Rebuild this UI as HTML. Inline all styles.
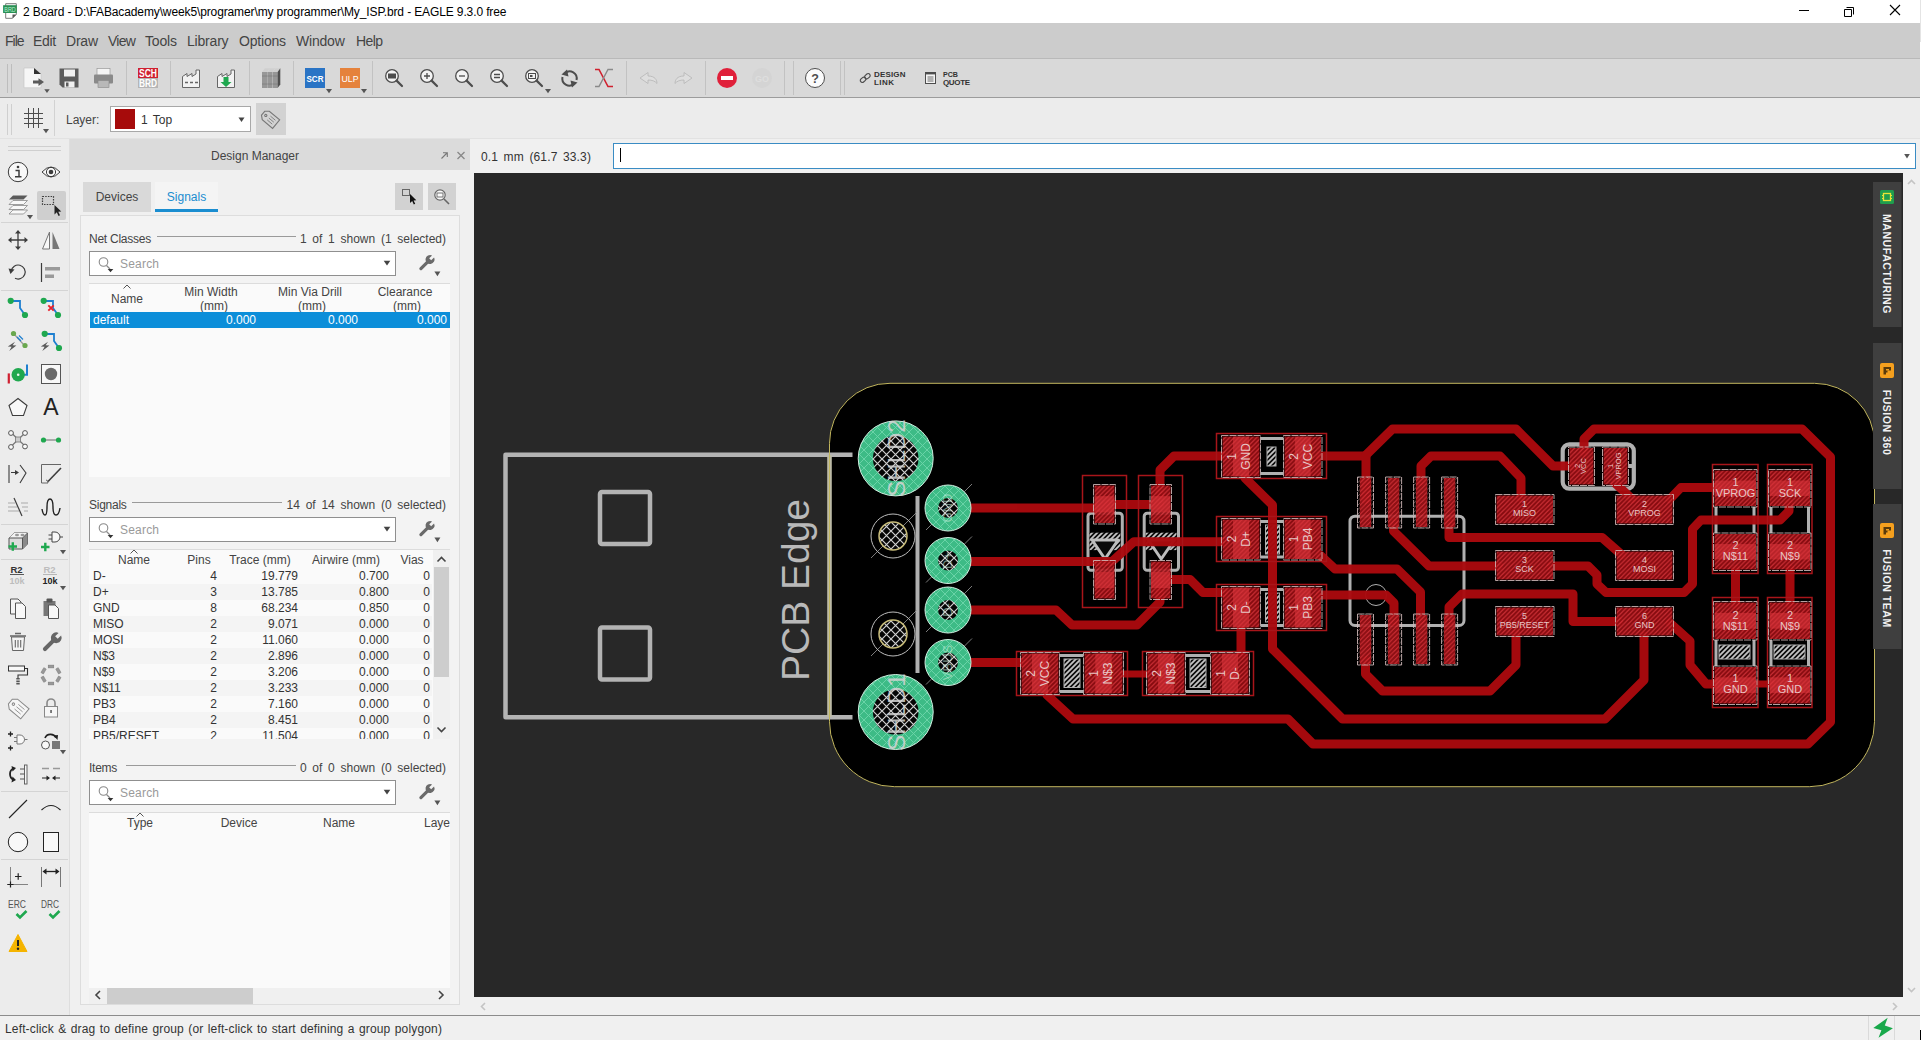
<!DOCTYPE html>
<html><head><meta charset="utf-8"><title>2 Board - EAGLE</title><style>
html,body{margin:0;padding:0}
body{width:1921px;height:1040px;position:relative;overflow:hidden;background:#f0f0f0;font-family:"Liberation Sans",sans-serif}
.abs{position:absolute}
.t{white-space:nowrap;line-height:16px}
.menu{font-size:14px;color:#444;letter-spacing:-0.2px}
</style></head><body>
<div class="abs" style="left:0;top:0;width:1920px;height:23px;background:#fff"></div>
<div class="abs t" style="left:23px;top:4px;font-size:12px;color:#000;letter-spacing:-0.12px" id="title">2 Board - D:\FABacademy\week5\programer\my programmer\My_ISP.brd - EAGLE 9.3.0 free</div>
<div class="abs" style="left:0;top:23px;width:1920px;height:35px;background:#cccccc"></div>
<div class="abs t menu" style="left:5px;top:33px;letter-spacing:-1.0px">File</div>
<div class="abs t menu" style="left:33px;top:33px;letter-spacing:-0.3px">Edit</div>
<div class="abs t menu" style="left:66px;top:33px;letter-spacing:-0.2px">Draw</div>
<div class="abs t menu" style="left:108px;top:33px;letter-spacing:-0.75px">View</div>
<div class="abs t menu" style="left:145px;top:33px;letter-spacing:-0.2px">Tools</div>
<div class="abs t menu" style="left:187px;top:33px;letter-spacing:-0.2px">Library</div>
<div class="abs t menu" style="left:239px;top:33px;letter-spacing:-0.2px">Options</div>
<div class="abs t menu" style="left:296px;top:33px;letter-spacing:-0.2px">Window</div>
<div class="abs t menu" style="left:356px;top:33px;letter-spacing:-0.55px">Help</div>
<div class="abs" style="left:0;top:58px;width:1920px;height:1px;background:#b9b9b9"></div>
<div class="abs" style="left:0;top:59px;width:1920px;height:38px;background:#d9d9d9"></div>
<div class="abs" style="left:0;top:97px;width:1920px;height:1px;background:#9c9c9c"></div>
<div class="abs" style="left:0;top:98px;width:1920px;height:41px;background:#ececec"></div>
<div class="abs" style="left:0;top:138px;width:1920px;height:1px;background:#e2e2e2"></div>
<div class="abs t" style="left:66px;top:112px;font-size:12px;color:#444">Layer:</div>
<div class="abs" style="left:110px;top:106px;width:139px;height:24px;background:#fff;border:1px solid #a8a8a8"></div>
<div class="abs" style="left:115px;top:109px;width:20px;height:20px;background:#a60b0b"></div>
<div class="abs t" style="left:141px;top:112px;font-size:12px;color:#333;word-spacing:2px">1 Top</div>
<div class="abs" style="left:256px;top:103px;width:30px;height:32px;background:#d2d2d2"></div>
<div class="abs" style="left:0;top:139px;width:70px;height:876px;background:#ececec"></div>
<div class="abs" style="left:69px;top:139px;width:1px;height:876px;background:#dedede"></div>
<div class="abs" style="left:37px;top:191px;width:29px;height:29px;background:#cfcfcf;border-radius:2px"></div>
<div class="abs" style="left:0;top:1015px;width:1920px;height:1px;background:#8c8c8c"></div>
<div class="abs" style="left:0;top:1016px;width:1920px;height:24px;background:#f0f0f0"></div>
<div class="abs t" style="left:5px;top:1021px;font-size:12px;color:#333;letter-spacing:0.15px;word-spacing:0.9px" id="status">Left-click &amp; drag to define group (or left-click to start defining a group polygon)</div>
<div class="abs" style="left:1868px;top:1016px;width:1px;height:24px;background:#dadada"></div>
<div class="abs" style="left:1894px;top:1016px;width:1px;height:24px;background:#dadada"></div>
<div class="abs" style="left:1920px;top:0;width:1px;height:1040px;background:#fff"></div>
<div class="abs" style="left:1920px;top:0;width:1px;height:42px;background:#e4e4e4"></div>
<div class="abs" style="left:1920px;top:1030px;width:1px;height:10px;background:#000"></div>
<div class="abs" style="left:470px;top:139px;width:1450px;height:34px;background:#f0f0f0"></div>
<div class="abs t" style="left:481px;top:149px;font-size:12px;color:#333;word-spacing:2px;letter-spacing:0.15px" id="coord">0.1 mm (61.7 33.3)</div>
<div class="abs" style="left:613px;top:143px;width:1301px;height:24px;background:#fff;border:1px solid #3a8cc4"></div>
<div class="abs" style="left:620px;top:148px;width:1px;height:14px;background:#000"></div>
<div class="abs" style="left:470px;top:173px;width:4px;height:842px;background:#f0f0f0"></div>
<div class="abs" style="left:1903px;top:173px;width:17px;height:842px;background:#f0f0f0"></div>
<div class="abs" style="left:474px;top:997px;width:1446px;height:18px;background:#f0f0f0"></div>
<div class="abs" style="left:70px;top:139px;width:400px;height:876px;background:#f0f0f0"></div>
<div class="abs" style="left:70px;top:139px;width:400px;height:31px;background:#dbdbdb"></div>
<div class="abs t" style="left:70px;top:148px;width:370px;text-align:center;font-size:12px;color:#444" id="dmtitle">Design Manager</div>
<div class="abs" style="left:83px;top:182px;width:68px;height:30px;background:#d9d9d9"></div>
<div class="abs t" style="left:83px;top:189px;width:68px;text-align:center;font-size:12px;color:#444">Devices</div>
<div class="abs" style="left:155px;top:182px;width:63px;height:27px;background:#f4f4f4"></div>
<div class="abs" style="left:155px;top:209px;width:63px;height:3px;background:#1a8dd0"></div>
<div class="abs t" style="left:155px;top:189px;width:63px;text-align:center;font-size:12px;color:#1a8dd0">Signals</div>
<div class="abs" style="left:395px;top:183px;width:28px;height:27px;background:#d2d2d2"></div>
<div class="abs" style="left:428px;top:183px;width:28px;height:27px;background:#d2d2d2"></div>
<div class="abs" style="left:80px;top:215px;width:380px;height:790px;background:#f3f3f3;border:1px solid #dddddd;box-sizing:border-box"></div>
<div class="abs t" style="left:89px;top:231px;font-size:12px;color:#444;letter-spacing:-0.25px">Net Classes</div>
<div class="abs" style="left:156.5px;top:236px;width:139.5px;height:1px;background:#9a9a9a"></div>
<div class="abs t" style="left:246px;top:231px;width:200px;text-align:right;font-size:12px;color:#444;word-spacing:2.4px">1 of 1 shown (1 selected)</div>
<div class="abs" style="left:89px;top:251px;width:305px;height:23px;background:#fff;border:1px solid #8f8f8f"></div>
<div class="abs t" style="left:120px;top:256px;font-size:12px;color:#9a9a9a;letter-spacing:0.2px">Search</div>
<div class="abs t" style="left:89px;top:497px;font-size:12px;color:#444;letter-spacing:-0.25px">Signals</div>
<div class="abs" style="left:131.5px;top:502px;width:150.5px;height:1px;background:#9a9a9a"></div>
<div class="abs t" style="left:246px;top:497px;width:200px;text-align:right;font-size:12px;color:#444;word-spacing:2.4px">14 of 14 shown (0 selected)</div>
<div class="abs" style="left:89px;top:517px;width:305px;height:23px;background:#fff;border:1px solid #8f8f8f"></div>
<div class="abs t" style="left:120px;top:522px;font-size:12px;color:#9a9a9a;letter-spacing:0.2px">Search</div>
<div class="abs t" style="left:89px;top:760px;font-size:12px;color:#444;letter-spacing:-0.25px">Items</div>
<div class="abs" style="left:126px;top:765px;width:170px;height:1px;background:#9a9a9a"></div>
<div class="abs t" style="left:246px;top:760px;width:200px;text-align:right;font-size:12px;color:#444;word-spacing:2.4px">0 of 0 shown (0 selected)</div>
<div class="abs" style="left:89px;top:780px;width:305px;height:23px;background:#fff;border:1px solid #8f8f8f"></div>
<div class="abs t" style="left:120px;top:785px;font-size:12px;color:#9a9a9a;letter-spacing:0.2px">Search</div>
<div class="abs" style="left:89px;top:283px;width:361px;height:193px;background:#fafafa;border-top:1px solid #dcdcdc"></div>
<div class="abs t" style="left:67px;top:291px;width:120px;text-align:center;font-size:12px;color:#444">Name</div>
<div class="abs t" style="left:151px;top:284px;width:120px;text-align:center;font-size:12px;color:#444">Min Width</div>
<div class="abs t" style="left:154px;top:298px;width:120px;text-align:center;font-size:12px;color:#444">(mm)</div>
<div class="abs t" style="left:250px;top:284px;width:120px;text-align:center;font-size:12px;color:#444">Min Via Drill</div>
<div class="abs t" style="left:252px;top:298px;width:120px;text-align:center;font-size:12px;color:#444">(mm)</div>
<div class="abs t" style="left:345px;top:284px;width:120px;text-align:center;font-size:12px;color:#444">Clearance</div>
<div class="abs t" style="left:347px;top:298px;width:120px;text-align:center;font-size:12px;color:#444">(mm)</div>
<div class="abs" style="left:90px;top:312px;width:360px;height:16px;background:#0c8ed9"></div>
<div class="abs t" style="left:93px;top:312px;font-size:12px;color:#fff">default</div>
<div class="abs t" style="left:196px;top:312px;width:60px;text-align:right;font-size:12px;color:#fff">0.000</div>
<div class="abs t" style="left:298px;top:312px;width:60px;text-align:right;font-size:12px;color:#fff">0.000</div>
<div class="abs t" style="left:387px;top:312px;width:60px;text-align:right;font-size:12px;color:#fff">0.000</div>
<div class="abs" style="left:89px;top:549px;width:361px;height:189px;background:#fafafa;border-top:1px solid #dcdcdc;overflow:hidden" id="sigtab">
<div class="abs" style="left:0;top:18px;width:343px;height:16px;background:#fafafa"></div>
<div class="abs t" style="left:4px;top:18px;font-size:12px;color:#333">D-</div>
<div class="abs t" style="left:68px;top:18px;width:60px;text-align:right;font-size:12px;color:#333">4</div>
<div class="abs t" style="left:149px;top:18px;width:60px;text-align:right;font-size:12px;color:#333">19.779</div>
<div class="abs t" style="left:240px;top:18px;width:60px;text-align:right;font-size:12px;color:#333">0.700</div>
<div class="abs t" style="left:281px;top:18px;width:60px;text-align:right;font-size:12px;color:#333">0</div>
<div class="abs" style="left:0;top:34px;width:343px;height:16px;background:#f4f4f4"></div>
<div class="abs t" style="left:4px;top:34px;font-size:12px;color:#333">D+</div>
<div class="abs t" style="left:68px;top:34px;width:60px;text-align:right;font-size:12px;color:#333">3</div>
<div class="abs t" style="left:149px;top:34px;width:60px;text-align:right;font-size:12px;color:#333">13.785</div>
<div class="abs t" style="left:240px;top:34px;width:60px;text-align:right;font-size:12px;color:#333">0.800</div>
<div class="abs t" style="left:281px;top:34px;width:60px;text-align:right;font-size:12px;color:#333">0</div>
<div class="abs" style="left:0;top:50px;width:343px;height:16px;background:#fafafa"></div>
<div class="abs t" style="left:4px;top:50px;font-size:12px;color:#333">GND</div>
<div class="abs t" style="left:68px;top:50px;width:60px;text-align:right;font-size:12px;color:#333">8</div>
<div class="abs t" style="left:149px;top:50px;width:60px;text-align:right;font-size:12px;color:#333">68.234</div>
<div class="abs t" style="left:240px;top:50px;width:60px;text-align:right;font-size:12px;color:#333">0.850</div>
<div class="abs t" style="left:281px;top:50px;width:60px;text-align:right;font-size:12px;color:#333">0</div>
<div class="abs" style="left:0;top:66px;width:343px;height:16px;background:#f4f4f4"></div>
<div class="abs t" style="left:4px;top:66px;font-size:12px;color:#333">MISO</div>
<div class="abs t" style="left:68px;top:66px;width:60px;text-align:right;font-size:12px;color:#333">2</div>
<div class="abs t" style="left:149px;top:66px;width:60px;text-align:right;font-size:12px;color:#333">9.071</div>
<div class="abs t" style="left:240px;top:66px;width:60px;text-align:right;font-size:12px;color:#333">0.000</div>
<div class="abs t" style="left:281px;top:66px;width:60px;text-align:right;font-size:12px;color:#333">0</div>
<div class="abs" style="left:0;top:82px;width:343px;height:16px;background:#fafafa"></div>
<div class="abs t" style="left:4px;top:82px;font-size:12px;color:#333">MOSI</div>
<div class="abs t" style="left:68px;top:82px;width:60px;text-align:right;font-size:12px;color:#333">2</div>
<div class="abs t" style="left:149px;top:82px;width:60px;text-align:right;font-size:12px;color:#333">11.060</div>
<div class="abs t" style="left:240px;top:82px;width:60px;text-align:right;font-size:12px;color:#333">0.000</div>
<div class="abs t" style="left:281px;top:82px;width:60px;text-align:right;font-size:12px;color:#333">0</div>
<div class="abs" style="left:0;top:98px;width:343px;height:16px;background:#f4f4f4"></div>
<div class="abs t" style="left:4px;top:98px;font-size:12px;color:#333">N$3</div>
<div class="abs t" style="left:68px;top:98px;width:60px;text-align:right;font-size:12px;color:#333">2</div>
<div class="abs t" style="left:149px;top:98px;width:60px;text-align:right;font-size:12px;color:#333">2.896</div>
<div class="abs t" style="left:240px;top:98px;width:60px;text-align:right;font-size:12px;color:#333">0.000</div>
<div class="abs t" style="left:281px;top:98px;width:60px;text-align:right;font-size:12px;color:#333">0</div>
<div class="abs" style="left:0;top:114px;width:343px;height:16px;background:#fafafa"></div>
<div class="abs t" style="left:4px;top:114px;font-size:12px;color:#333">N$9</div>
<div class="abs t" style="left:68px;top:114px;width:60px;text-align:right;font-size:12px;color:#333">2</div>
<div class="abs t" style="left:149px;top:114px;width:60px;text-align:right;font-size:12px;color:#333">3.206</div>
<div class="abs t" style="left:240px;top:114px;width:60px;text-align:right;font-size:12px;color:#333">0.000</div>
<div class="abs t" style="left:281px;top:114px;width:60px;text-align:right;font-size:12px;color:#333">0</div>
<div class="abs" style="left:0;top:130px;width:343px;height:16px;background:#f4f4f4"></div>
<div class="abs t" style="left:4px;top:130px;font-size:12px;color:#333">N$11</div>
<div class="abs t" style="left:68px;top:130px;width:60px;text-align:right;font-size:12px;color:#333">2</div>
<div class="abs t" style="left:149px;top:130px;width:60px;text-align:right;font-size:12px;color:#333">3.233</div>
<div class="abs t" style="left:240px;top:130px;width:60px;text-align:right;font-size:12px;color:#333">0.000</div>
<div class="abs t" style="left:281px;top:130px;width:60px;text-align:right;font-size:12px;color:#333">0</div>
<div class="abs" style="left:0;top:146px;width:343px;height:16px;background:#fafafa"></div>
<div class="abs t" style="left:4px;top:146px;font-size:12px;color:#333">PB3</div>
<div class="abs t" style="left:68px;top:146px;width:60px;text-align:right;font-size:12px;color:#333">2</div>
<div class="abs t" style="left:149px;top:146px;width:60px;text-align:right;font-size:12px;color:#333">7.160</div>
<div class="abs t" style="left:240px;top:146px;width:60px;text-align:right;font-size:12px;color:#333">0.000</div>
<div class="abs t" style="left:281px;top:146px;width:60px;text-align:right;font-size:12px;color:#333">0</div>
<div class="abs" style="left:0;top:162px;width:343px;height:16px;background:#f4f4f4"></div>
<div class="abs t" style="left:4px;top:162px;font-size:12px;color:#333">PB4</div>
<div class="abs t" style="left:68px;top:162px;width:60px;text-align:right;font-size:12px;color:#333">2</div>
<div class="abs t" style="left:149px;top:162px;width:60px;text-align:right;font-size:12px;color:#333">8.451</div>
<div class="abs t" style="left:240px;top:162px;width:60px;text-align:right;font-size:12px;color:#333">0.000</div>
<div class="abs t" style="left:281px;top:162px;width:60px;text-align:right;font-size:12px;color:#333">0</div>
<div class="abs" style="left:0;top:178px;width:343px;height:16px;background:#fafafa"></div>
<div class="abs t" style="left:4px;top:178px;font-size:12px;color:#333">PB5/RESET</div>
<div class="abs t" style="left:68px;top:178px;width:60px;text-align:right;font-size:12px;color:#333">2</div>
<div class="abs t" style="left:149px;top:178px;width:60px;text-align:right;font-size:12px;color:#333">11.504</div>
<div class="abs t" style="left:240px;top:178px;width:60px;text-align:right;font-size:12px;color:#333">0.000</div>
<div class="abs t" style="left:281px;top:178px;width:60px;text-align:right;font-size:12px;color:#333">0</div>
<div class="abs" style="left:344px;top:0;width:17px;height:191px;background:#f0f0f0"></div>
<div class="abs" style="left:345px;top:17px;width:15px;height:110px;background:#cdcdcd"></div>
</div>
<div class="abs t" style="left:74px;top:552px;width:120px;text-align:center;font-size:12px;color:#444">Name</div>
<div class="abs t" style="left:139px;top:552px;width:120px;text-align:center;font-size:12px;color:#444">Pins</div>
<div class="abs t" style="left:200px;top:552px;width:120px;text-align:center;font-size:12px;color:#444">Trace (mm)</div>
<div class="abs t" style="left:286px;top:552px;width:120px;text-align:center;font-size:12px;color:#444">Airwire (mm)</div>
<div class="abs t" style="left:352px;top:552px;width:120px;text-align:center;font-size:12px;color:#444">Vias</div>
<div class="abs" style="left:89px;top:812px;width:361px;height:191px;background:#fafafa;border-top:1px solid #dcdcdc;overflow:hidden">
<div class="abs t" style="left:335px;top:2px;font-size:12px;color:#444">Layer</div>
<div class="abs" style="left:0;top:175px;width:361px;height:16px;background:#f0f0f0"></div>
<div class="abs" style="left:18px;top:175px;width:146px;height:16px;background:#cdcdcd"></div>
</div>
<div class="abs t" style="left:80px;top:815px;width:120px;text-align:center;font-size:12px;color:#444">Type</div>
<div class="abs t" style="left:179px;top:815px;width:120px;text-align:center;font-size:12px;color:#444">Device</div>
<div class="abs t" style="left:279px;top:815px;width:120px;text-align:center;font-size:12px;color:#444">Name</div>
<svg class="abs" style="left:474px;top:173px" width="1429" height="824" viewBox="474 173 1429 824" font-family="Liberation Sans, sans-serif">
<defs>
<pattern id="hp" width="4.5" height="4.5" patternUnits="userSpaceOnUse"><rect width="4.5" height="4.5" fill="#da3239"/><path d="M-1,1 L1,-1 M0,4.5 L4.5,0 M3.5,5.5 L5.5,3.5" stroke="#900b10" stroke-width="2"/></pattern>
<pattern id="ht" width="4.5" height="4.5" patternUnits="userSpaceOnUse"><path d="M-1,1 L1,-1 M0,4.5 L4.5,0 M3.5,5.5 L5.5,3.5" stroke="#c9b0b0" stroke-width="0.7" opacity="0.7"/></pattern>
<pattern id="hg" width="5" height="5" patternUnits="userSpaceOnUse"><rect width="5" height="5" fill="#0a0a0a"/><path d="M-1,1 L1,-1 M0,5 L5,0 M4,6 L6,4" stroke="#c4c4c4" stroke-width="1.8"/></pattern>
<pattern id="xg" width="9" height="9" patternUnits="userSpaceOnUse"><rect width="9" height="9" fill="#3dbb86"/><path d="M0,0 L9,9 M0,9 L9,0" stroke="#6ed6aa" stroke-width="0.9"/></pattern>
<pattern id="xd" width="9" height="9" patternUnits="userSpaceOnUse"><rect width="9" height="9" fill="#050505"/><path d="M0,0 L9,9 M0,9 L9,0" stroke="#cfcfcf" stroke-width="1.2"/></pattern>
</defs>
<rect x="474" y="173" width="1429" height="824" fill="#282828"/>
<path d="M890,383.3 H1814.5 A60,60 0 0 1 1874.5,443.3 V721.7 A65,65 0 0 1 1809.5,786.7 H894.5 A65,65 0 0 1 829.5,721.7 V443.3 A60,60 0 0 1 890,383.3 Z" fill="#000"/>
<g fill="none" stroke="#b3b3b3" stroke-width="4.5" stroke-linejoin="round">
<path d="M852.5,454.7 H505.5 V717.3 H852.5"/>
<rect x="600" y="492" width="50" height="52" rx="2"/>
<rect x="600" y="627.5" width="50" height="52" rx="2"/>
</g>
<path d="M829.5,455 V717" stroke="#bdbba6" stroke-width="4.6" fill="none"/>
<path d="M890,383.3 H1814.5 A60,60 0 0 1 1874.5,443.3 V721.7 A65,65 0 0 1 1809.5,786.7 H894.5 A65,65 0 0 1 829.5,721.7 V443.3 A60,60 0 0 1 890,383.3 Z" fill="none" stroke="#c2b65e" stroke-width="1"/>
<text transform="translate(809,590) rotate(-90)" text-anchor="middle" font-size="39" fill="#b9b9b9">PCB Edge</text>
<g fill="none" stroke="#b0b0b0" stroke-width="3">
<path d="M1261,438.5 H1283 M1261,473.5 H1283"/>
<path d="M1261,521.5 H1283 M1261,557 H1283"/>
<path d="M1261,589.5 H1283 M1261,625.5 H1283"/>
<path d="M1060,655.5 H1083 M1060,691.5 H1083"/>
<path d="M1186,655.5 H1210 M1186,691.5 H1210"/>
<rect x="1088" y="513.3" width="34.3" height="57" rx="3"/>
<rect x="1144.2" y="513.3" width="34.3" height="57" rx="3"/>
<rect x="1350" y="516.2" width="114" height="109.3" rx="5"/>
<rect x="1562.7" y="444.3" width="71.1" height="44.3" rx="6.5" stroke-width="4.2"/>
<path d="M1629,466 H1633.5" stroke-width="4"/>
<path d="M1716,507 V533 M1716,640 V666"/>
<path d="M1754,507 V533 M1754,640 V666"/>
<path d="M1771,507 V533 M1771,640 V666"/>
<path d="M1808.5,507 V533 M1808.5,640 V666"/>
</g>
<circle cx="1376" cy="595" r="10.5" fill="none" stroke="#b0b0b0" stroke-width="1"/>
<rect x="1267" y="447" width="9" height="19" fill="url(#hg)" stroke="#b0b0b0" stroke-width="1"/>
<rect x="1265.5" y="525" width="14.0" height="29" fill="url(#hg)" stroke="#b0b0b0" stroke-width="1"/>
<rect x="1265.5" y="593" width="14.0" height="29" fill="url(#hg)" stroke="#b0b0b0" stroke-width="1"/>
<rect x="1064" y="659" width="16" height="28.5" fill="url(#hg)" stroke="#b0b0b0" stroke-width="1"/>
<rect x="1190" y="659" width="16" height="28.5" fill="url(#hg)" stroke="#b0b0b0" stroke-width="1"/>
<rect x="1719" y="645" width="31" height="14" fill="url(#hg)" stroke="#b0b0b0" stroke-width="1"/>
<rect x="1774" y="645" width="31" height="14" fill="url(#hg)" stroke="#b0b0b0" stroke-width="1"/>
<rect x="1089.6" y="532.7" width="30.7" height="17.4" fill="url(#hg)"/>
<path d="M1092.1,540 H1118.1 L1105.0,559 Z" fill="#0a0a0a" stroke="#bdbdbd" stroke-width="3" stroke-linejoin="round"/>
<rect x="1145.8" y="532.7" width="30.7" height="17.4" fill="url(#hg)"/>
<path d="M1148.3,540 H1174.3 L1161.2,559 Z" fill="#0a0a0a" stroke="#bdbdbd" stroke-width="3" stroke-linejoin="round"/>
<g opacity="0.97">
<path d="M960,508 L1105,508" stroke="#aa0a0e" stroke-width="9" fill="none" stroke-linejoin="round" stroke-linecap="round"/>
<path d="M1105,504.5 L1160,504.5" stroke="#aa0a0e" stroke-width="9" fill="none" stroke-linejoin="round" stroke-linecap="round"/>
<path d="M1160,500 L1160,470 L1174,456 L1224,456" stroke="#aa0a0e" stroke-width="9" fill="none" stroke-linejoin="round" stroke-linecap="round"/>
<path d="M1245,478 L1272.5,505 L1272.5,649 L1342.5,719 L1605,719 L1644,680 L1644,636" stroke="#aa0a0e" stroke-width="9" fill="none" stroke-linejoin="round" stroke-linecap="round"/>
<path d="M960,561.5 L1112,561.5 L1134,541.7 L1224,541.7" stroke="#aa0a0e" stroke-width="9" fill="none" stroke-linejoin="round" stroke-linecap="round"/>
<path d="M960,610 L1056,610 L1072,625 L1137,625 L1160,602 L1160,580" stroke="#aa0a0e" stroke-width="9" fill="none" stroke-linejoin="round" stroke-linecap="round"/>
<path d="M1160,579.5 L1190,579.5 L1203,592.5 L1224,592.5" stroke="#aa0a0e" stroke-width="9" fill="none" stroke-linejoin="round" stroke-linecap="round"/>
<path d="M960,662.5 L1024,662.5" stroke="#aa0a0e" stroke-width="9" fill="none" stroke-linejoin="round" stroke-linecap="round"/>
<path d="M1122,674 L1148,674" stroke="#aa0a0e" stroke-width="7" fill="none" stroke-linejoin="round" stroke-linecap="round"/>
<path d="M1241,629 L1241,654" stroke="#aa0a0e" stroke-width="9" fill="none" stroke-linejoin="round" stroke-linecap="round"/>
<path d="M1047,695 L1073,719 L1288,719 L1313,744 L1808,744 L1830.5,722 L1830.5,457 L1802,429 L1594,429 L1584,439 L1584,452" stroke="#aa0a0e" stroke-width="9" fill="none" stroke-linejoin="round" stroke-linecap="round"/>
<path d="M1320,456 L1366,456" stroke="#aa0a0e" stroke-width="9" fill="none" stroke-linejoin="round" stroke-linecap="round"/>
<path d="M1366,500 L1366,455 L1392.5,429 L1516,429 L1553,466 L1574,466" stroke="#aa0a0e" stroke-width="9" fill="none" stroke-linejoin="round" stroke-linecap="round"/>
<path d="M1421,482 L1421,466 L1431,456 L1500,456 L1521,478 L1521,498" stroke="#aa0a0e" stroke-width="9" fill="none" stroke-linejoin="round" stroke-linecap="round"/>
<path d="M1449,522 L1449,537.5 L1602,537.5 L1622,555" stroke="#aa0a0e" stroke-width="9" fill="none" stroke-linejoin="round" stroke-linecap="round"/>
<path d="M1393.5,522 L1393.5,531 L1429,566 L1499,566" stroke="#aa0a0e" stroke-width="9" fill="none" stroke-linejoin="round" stroke-linecap="round"/>
<path d="M1551,566 L1588,566 L1597,575 L1597,584 L1606,592.5 L1684,592.5 L1692.5,584 L1692.5,529 L1701,520 L1780,520 L1789,511 L1789,503" stroke="#aa0a0e" stroke-width="9" fill="none" stroke-linejoin="round" stroke-linecap="round"/>
<path d="M1320,555 L1335,569 L1397,569 L1420.5,592 L1420.5,622" stroke="#aa0a0e" stroke-width="9" fill="none" stroke-linejoin="round" stroke-linecap="round"/>
<path d="M1320,595 L1386,595 L1394,603 L1394,622" stroke="#aa0a0e" stroke-width="9" fill="none" stroke-linejoin="round" stroke-linecap="round"/>
<path d="M1449,622 L1449,607 L1462,594 L1573,594 L1573,621.5 L1619,621.5" stroke="#aa0a0e" stroke-width="9" fill="none" stroke-linejoin="round" stroke-linecap="round"/>
<path d="M1365.5,660 L1365.5,674 L1382.5,691 L1490,691 L1516,665 L1516,634" stroke="#aa0a0e" stroke-width="9" fill="none" stroke-linejoin="round" stroke-linecap="round"/>
<path d="M1615,483 L1632,499" stroke="#aa0a0e" stroke-width="9" fill="none" stroke-linejoin="round" stroke-linecap="round"/>
<path d="M1670,499 L1681,487.5 L1718,487.5" stroke="#aa0a0e" stroke-width="9" fill="none" stroke-linejoin="round" stroke-linecap="round"/>
<path d="M1735.5,569 L1735.5,605" stroke="#aa0a0e" stroke-width="9" fill="none" stroke-linejoin="round" stroke-linecap="round"/>
<path d="M1790,569 L1790,605" stroke="#aa0a0e" stroke-width="9" fill="none" stroke-linejoin="round" stroke-linecap="round"/>
<path d="M1670,623 L1690,641 L1690,665 L1706,684 L1718,684" stroke="#aa0a0e" stroke-width="9" fill="none" stroke-linejoin="round" stroke-linecap="round"/>
<path d="M1755,684 L1772,684" stroke="#aa0a0e" stroke-width="7" fill="none" stroke-linejoin="round" stroke-linecap="round"/>
</g>
<g fill="none" stroke="#a8151a" stroke-width="1.5">
<rect x="1216.5" y="433.5" width="110.0" height="45.0"/>
<rect x="1216.5" y="516.5" width="110.0" height="45.0"/>
<rect x="1216.5" y="584.5" width="110.0" height="46.0"/>
<rect x="1016.5" y="651.5" width="111.0" height="44.0"/>
<rect x="1142.5" y="651.5" width="111.0" height="44.0"/>
<rect x="1082.5" y="475.5" width="44.0" height="132.0"/>
<rect x="1138.5" y="475.5" width="44.0" height="132.0"/>
<rect x="1712.5" y="464.5" width="45.5" height="109.0"/>
<rect x="1767.5" y="464.5" width="44.5" height="109.0"/>
<rect x="1712.5" y="597.5" width="45.5" height="110.0"/>
<rect x="1767.5" y="597.5" width="44.5" height="110.0"/>
</g>
<rect x="1094.5" y="485.5" width="20.0" height="37.5" fill="url(#hp)" opacity="0.93"/>
<rect x="1094.5" y="496.15" width="20" height="16.2" fill="#d8333a" opacity="0.6"/>
<rect x="1093.5" y="484.5" width="22" height="39.5" fill="none" stroke="#d4bcbc" stroke-width="1" stroke-dasharray="7 1" opacity="0.85"/>
<rect x="1094.5" y="561.5" width="20.0" height="37" fill="url(#hp)" opacity="0.93"/>
<rect x="1094.5" y="572.0" width="20" height="16.0" fill="#d8333a" opacity="0.6"/>
<rect x="1093.5" y="560.5" width="22" height="39" fill="none" stroke="#d4bcbc" stroke-width="1" stroke-dasharray="7 1" opacity="0.85"/>
<rect x="1151.0" y="485.5" width="19.5" height="37.5" fill="url(#hp)" opacity="0.93"/>
<rect x="1151.0" y="496.15" width="19.5" height="16.2" fill="#d8333a" opacity="0.6"/>
<rect x="1150.0" y="484.5" width="21.5" height="39.5" fill="none" stroke="#d4bcbc" stroke-width="1" stroke-dasharray="7 1" opacity="0.85"/>
<rect x="1151.0" y="561.5" width="19.5" height="37" fill="url(#hp)" opacity="0.93"/>
<rect x="1151.0" y="572.0" width="19.5" height="16.0" fill="#d8333a" opacity="0.6"/>
<rect x="1150.0" y="560.5" width="21.5" height="39" fill="none" stroke="#d4bcbc" stroke-width="1" stroke-dasharray="7 1" opacity="0.85"/>
<rect x="1222.5" y="436.5" width="37.0" height="40" fill="url(#hp)" opacity="0.93"/>
<rect x="1233.0" y="436.5" width="16.0" height="40" fill="#d8333a" opacity="0.6"/>
<rect x="1221.5" y="435.5" width="39" height="42" fill="none" stroke="#d4bcbc" stroke-width="1" stroke-dasharray="7 1" opacity="0.85"/>
<rect x="1284.5" y="436.5" width="36.5" height="40" fill="url(#hp)" opacity="0.93"/>
<rect x="1294.85" y="436.5" width="15.8" height="40" fill="#d8333a" opacity="0.6"/>
<rect x="1283.5" y="435.5" width="38.5" height="42" fill="none" stroke="#d4bcbc" stroke-width="1" stroke-dasharray="7 1" opacity="0.85"/>
<rect x="1222.5" y="519.5" width="37.0" height="39.5" fill="url(#hp)" opacity="0.93"/>
<rect x="1233.0" y="519.5" width="16.0" height="39.5" fill="#d8333a" opacity="0.6"/>
<rect x="1221.5" y="518.5" width="39" height="41.5" fill="none" stroke="#d4bcbc" stroke-width="1" stroke-dasharray="7 1" opacity="0.85"/>
<rect x="1284.5" y="519.5" width="36.5" height="39.5" fill="url(#hp)" opacity="0.93"/>
<rect x="1294.85" y="519.5" width="15.8" height="39.5" fill="#d8333a" opacity="0.6"/>
<rect x="1283.5" y="518.5" width="38.5" height="41.5" fill="none" stroke="#d4bcbc" stroke-width="1" stroke-dasharray="7 1" opacity="0.85"/>
<rect x="1222.5" y="587.5" width="37.0" height="40" fill="url(#hp)" opacity="0.93"/>
<rect x="1233.0" y="587.5" width="16.0" height="40" fill="#d8333a" opacity="0.6"/>
<rect x="1221.5" y="586.5" width="39" height="42" fill="none" stroke="#d4bcbc" stroke-width="1" stroke-dasharray="7 1" opacity="0.85"/>
<rect x="1284.5" y="587.5" width="36.5" height="40" fill="url(#hp)" opacity="0.93"/>
<rect x="1294.85" y="587.5" width="15.8" height="40" fill="#d8333a" opacity="0.6"/>
<rect x="1283.5" y="586.5" width="38.5" height="42" fill="none" stroke="#d4bcbc" stroke-width="1" stroke-dasharray="7 1" opacity="0.85"/>
<rect x="1021.5" y="653.5" width="37.0" height="40" fill="url(#hp)" opacity="0.93"/>
<rect x="1032.0" y="653.5" width="16.0" height="40" fill="#d8333a" opacity="0.6"/>
<rect x="1020.5" y="652.5" width="39" height="42" fill="none" stroke="#d4bcbc" stroke-width="1" stroke-dasharray="7 1" opacity="0.85"/>
<rect x="1084.5" y="653.5" width="38.0" height="40" fill="url(#hp)" opacity="0.93"/>
<rect x="1095.3" y="653.5" width="16.400000000000002" height="40" fill="#d8333a" opacity="0.6"/>
<rect x="1083.5" y="652.5" width="40" height="42" fill="none" stroke="#d4bcbc" stroke-width="1" stroke-dasharray="7 1" opacity="0.85"/>
<rect x="1147.5" y="653.5" width="37.0" height="40" fill="url(#hp)" opacity="0.93"/>
<rect x="1158.0" y="653.5" width="16.0" height="40" fill="#d8333a" opacity="0.6"/>
<rect x="1146.5" y="652.5" width="39" height="42" fill="none" stroke="#d4bcbc" stroke-width="1" stroke-dasharray="7 1" opacity="0.85"/>
<rect x="1211.5" y="653.5" width="37.0" height="40" fill="url(#hp)" opacity="0.93"/>
<rect x="1222.0" y="653.5" width="16.0" height="40" fill="#d8333a" opacity="0.6"/>
<rect x="1210.5" y="652.5" width="39" height="42" fill="none" stroke="#d4bcbc" stroke-width="1" stroke-dasharray="7 1" opacity="0.85"/>
<rect x="1357.5" y="477.0" width="16.0" height="51.0" fill="url(#ht)"/>
<rect x="1359.8" y="478.0" width="11.4" height="49.0" fill="url(#hp)" opacity="0.93"/>
<rect x="1357.5" y="477.0" width="16.0" height="51.0" fill="none" stroke="#d4bcbc" stroke-width="1" stroke-dasharray="7 1" opacity="0.85"/>
<rect x="1357.5" y="614.0" width="16.0" height="51.0" fill="url(#ht)"/>
<rect x="1359.8" y="615.0" width="11.4" height="49.0" fill="url(#hp)" opacity="0.93"/>
<rect x="1357.5" y="614.0" width="16.0" height="51.0" fill="none" stroke="#d4bcbc" stroke-width="1" stroke-dasharray="7 1" opacity="0.85"/>
<rect x="1385.6" y="477.0" width="16.0" height="51.0" fill="url(#ht)"/>
<rect x="1387.8999999999999" y="478.0" width="11.4" height="49.0" fill="url(#hp)" opacity="0.93"/>
<rect x="1385.6" y="477.0" width="16.0" height="51.0" fill="none" stroke="#d4bcbc" stroke-width="1" stroke-dasharray="7 1" opacity="0.85"/>
<rect x="1385.6" y="614.0" width="16.0" height="51.0" fill="url(#ht)"/>
<rect x="1387.8999999999999" y="615.0" width="11.4" height="49.0" fill="url(#hp)" opacity="0.93"/>
<rect x="1385.6" y="614.0" width="16.0" height="51.0" fill="none" stroke="#d4bcbc" stroke-width="1" stroke-dasharray="7 1" opacity="0.85"/>
<rect x="1413.6" y="477.0" width="16.0" height="51.0" fill="url(#ht)"/>
<rect x="1415.8999999999999" y="478.0" width="11.4" height="49.0" fill="url(#hp)" opacity="0.93"/>
<rect x="1413.6" y="477.0" width="16.0" height="51.0" fill="none" stroke="#d4bcbc" stroke-width="1" stroke-dasharray="7 1" opacity="0.85"/>
<rect x="1413.6" y="614.0" width="16.0" height="51.0" fill="url(#ht)"/>
<rect x="1415.8999999999999" y="615.0" width="11.4" height="49.0" fill="url(#hp)" opacity="0.93"/>
<rect x="1413.6" y="614.0" width="16.0" height="51.0" fill="none" stroke="#d4bcbc" stroke-width="1" stroke-dasharray="7 1" opacity="0.85"/>
<rect x="1441.6" y="477.0" width="16.0" height="51.0" fill="url(#ht)"/>
<rect x="1443.8999999999999" y="478.0" width="11.4" height="49.0" fill="url(#hp)" opacity="0.93"/>
<rect x="1441.6" y="477.0" width="16.0" height="51.0" fill="none" stroke="#d4bcbc" stroke-width="1" stroke-dasharray="7 1" opacity="0.85"/>
<rect x="1441.6" y="614.0" width="16.0" height="51.0" fill="url(#ht)"/>
<rect x="1443.8999999999999" y="615.0" width="11.4" height="49.0" fill="url(#hp)" opacity="0.93"/>
<rect x="1441.6" y="614.0" width="16.0" height="51.0" fill="none" stroke="#d4bcbc" stroke-width="1" stroke-dasharray="7 1" opacity="0.85"/>
<rect x="1496.5" y="495.5" width="56.5" height="28" fill="url(#hp)" opacity="0.93"/>
<rect x="1495.5" y="494.5" width="58.5" height="30" fill="none" stroke="#d4bcbc" stroke-width="1" stroke-dasharray="7 1" opacity="0.85"/>
<rect x="1496.5" y="551.5" width="56.5" height="28" fill="url(#hp)" opacity="0.93"/>
<rect x="1495.5" y="550.5" width="58.5" height="30" fill="none" stroke="#d4bcbc" stroke-width="1" stroke-dasharray="7 1" opacity="0.85"/>
<rect x="1496.5" y="607.5" width="56.5" height="28" fill="url(#hp)" opacity="0.93"/>
<rect x="1495.5" y="606.5" width="58.5" height="30" fill="none" stroke="#d4bcbc" stroke-width="1" stroke-dasharray="7 1" opacity="0.85"/>
<rect x="1616.5" y="495.5" width="56.0" height="28" fill="url(#hp)" opacity="0.93"/>
<rect x="1615.5" y="494.5" width="58" height="30" fill="none" stroke="#d4bcbc" stroke-width="1" stroke-dasharray="7 1" opacity="0.85"/>
<rect x="1616.5" y="551.5" width="56.0" height="28" fill="url(#hp)" opacity="0.93"/>
<rect x="1615.5" y="550.5" width="58" height="30" fill="none" stroke="#d4bcbc" stroke-width="1" stroke-dasharray="7 1" opacity="0.85"/>
<rect x="1616.5" y="607.5" width="56.0" height="28" fill="url(#hp)" opacity="0.93"/>
<rect x="1615.5" y="606.5" width="58" height="30" fill="none" stroke="#d4bcbc" stroke-width="1" stroke-dasharray="7 1" opacity="0.85"/>
<rect x="1569.5" y="448.0" width="24.0" height="36.5" fill="url(#hp)" opacity="0.93"/>
<rect x="1568.5" y="447.0" width="26" height="38.5" fill="none" stroke="#d4bcbc" stroke-width="1" stroke-dasharray="7 1" opacity="0.85"/>
<rect x="1603.5" y="448.0" width="24.0" height="36.5" fill="url(#hp)" opacity="0.93"/>
<rect x="1602.5" y="447.0" width="26" height="38.5" fill="none" stroke="#d4bcbc" stroke-width="1" stroke-dasharray="7 1" opacity="0.85"/>
<rect x="1714.5" y="470.5" width="41.5" height="35.5" fill="url(#hp)" opacity="0.93"/>
<rect x="1714.5" y="480.55" width="41.5" height="15.4" fill="#d8333a" opacity="0.6"/>
<rect x="1713.5" y="469.5" width="43.5" height="37.5" fill="none" stroke="#d4bcbc" stroke-width="1" stroke-dasharray="7 1" opacity="0.85"/>
<rect x="1714.5" y="534.0" width="41.5" height="35.5" fill="url(#hp)" opacity="0.93"/>
<rect x="1714.5" y="544.05" width="41.5" height="15.4" fill="#d8333a" opacity="0.6"/>
<rect x="1713.5" y="533.0" width="43.5" height="37.5" fill="none" stroke="#d4bcbc" stroke-width="1" stroke-dasharray="7 1" opacity="0.85"/>
<rect x="1714.5" y="602.5" width="41.5" height="36.5" fill="url(#hp)" opacity="0.93"/>
<rect x="1714.5" y="612.85" width="41.5" height="15.8" fill="#d8333a" opacity="0.6"/>
<rect x="1713.5" y="601.5" width="43.5" height="38.5" fill="none" stroke="#d4bcbc" stroke-width="1" stroke-dasharray="7 1" opacity="0.85"/>
<rect x="1714.5" y="667.0" width="41.5" height="36.5" fill="url(#hp)" opacity="0.93"/>
<rect x="1714.5" y="677.35" width="41.5" height="15.8" fill="#d8333a" opacity="0.6"/>
<rect x="1713.5" y="666.0" width="43.5" height="38.5" fill="none" stroke="#d4bcbc" stroke-width="1" stroke-dasharray="7 1" opacity="0.85"/>
<rect x="1769.5" y="470.5" width="40.5" height="35.5" fill="url(#hp)" opacity="0.93"/>
<rect x="1769.5" y="480.55" width="40.5" height="15.4" fill="#d8333a" opacity="0.6"/>
<rect x="1768.5" y="469.5" width="42.5" height="37.5" fill="none" stroke="#d4bcbc" stroke-width="1" stroke-dasharray="7 1" opacity="0.85"/>
<rect x="1769.5" y="534.0" width="40.5" height="35.5" fill="url(#hp)" opacity="0.93"/>
<rect x="1769.5" y="544.05" width="40.5" height="15.4" fill="#d8333a" opacity="0.6"/>
<rect x="1768.5" y="533.0" width="42.5" height="37.5" fill="none" stroke="#d4bcbc" stroke-width="1" stroke-dasharray="7 1" opacity="0.85"/>
<rect x="1769.5" y="602.5" width="40.5" height="36.5" fill="url(#hp)" opacity="0.93"/>
<rect x="1769.5" y="612.85" width="40.5" height="15.8" fill="#d8333a" opacity="0.6"/>
<rect x="1768.5" y="601.5" width="42.5" height="38.5" fill="none" stroke="#d4bcbc" stroke-width="1" stroke-dasharray="7 1" opacity="0.85"/>
<rect x="1769.5" y="667.0" width="40.5" height="36.5" fill="url(#hp)" opacity="0.93"/>
<rect x="1769.5" y="677.35" width="40.5" height="15.8" fill="#d8333a" opacity="0.6"/>
<rect x="1768.5" y="666.0" width="42.5" height="38.5" fill="none" stroke="#d4bcbc" stroke-width="1" stroke-dasharray="7 1" opacity="0.85"/>
<path d="M917.5,496 V673" stroke="#b0b0b0" stroke-width="4" fill="none"/>
<path d="M871,558 L917,512" stroke="#9a9a9a" stroke-width="0.8"/>
<circle cx="893" cy="536" r="22" fill="none" stroke="#bdbdbd" stroke-width="1"/>
<circle cx="893" cy="536" r="14" fill="url(#xd)" stroke="#c8bc7a" stroke-width="1.5"/>
<path d="M871,656 L917,610" stroke="#9a9a9a" stroke-width="0.8"/>
<circle cx="893" cy="634" r="22" fill="none" stroke="#bdbdbd" stroke-width="1"/>
<circle cx="893" cy="634" r="14" fill="url(#xd)" stroke="#c8bc7a" stroke-width="1.5"/>
<path d="M926,530 L972,484" stroke="#9a9a9a" stroke-width="0.8"/>
<path d="M926,582.5 L972,536.5" stroke="#9a9a9a" stroke-width="0.8"/>
<path d="M926,632 L972,586" stroke="#9a9a9a" stroke-width="0.8"/>
<path d="M926,684.5 L972,638.5" stroke="#9a9a9a" stroke-width="0.8"/>
<circle cx="895.7" cy="458.4" r="37.5" fill="url(#xg)" stroke="#cfeee0" stroke-width="1"/>
<circle cx="895.7" cy="458.4" r="22.8" fill="url(#xd)"/>
<circle cx="895.7" cy="712" r="37.5" fill="url(#xg)" stroke="#cfeee0" stroke-width="1"/>
<circle cx="895.7" cy="712" r="22.8" fill="url(#xd)"/>
<circle cx="948" cy="508" r="23" fill="url(#xg)" stroke="#cfeee0" stroke-width="1"/>
<circle cx="948" cy="508" r="10" fill="url(#xd)"/>
<circle cx="948" cy="560.5" r="23" fill="url(#xg)" stroke="#cfeee0" stroke-width="1"/>
<circle cx="948" cy="560.5" r="10" fill="url(#xd)"/>
<circle cx="948" cy="610" r="23" fill="url(#xg)" stroke="#cfeee0" stroke-width="1"/>
<circle cx="948" cy="610" r="10" fill="url(#xd)"/>
<circle cx="948" cy="662.5" r="23" fill="url(#xg)" stroke="#cfeee0" stroke-width="1"/>
<circle cx="948" cy="662.5" r="10" fill="url(#xd)"/>
<text transform="translate(905,458) rotate(-90)" text-anchor="middle" font-size="24" fill="#d4d4d4" opacity="0.85">SHLD2</text>
<text transform="translate(905,712) rotate(-90)" text-anchor="middle" font-size="24" fill="#d4d4d4" opacity="0.85">SHLD1</text>
<text transform="translate(952,508) rotate(-90)" text-anchor="middle" font-size="13" fill="#c9eedd" opacity="0.55">GND</text>
<text transform="translate(952,560.5) rotate(-90)" text-anchor="middle" font-size="13" fill="#c9eedd" opacity="0.55">D+</text>
<text transform="translate(952,610) rotate(-90)" text-anchor="middle" font-size="13" fill="#c9eedd" opacity="0.55">D-</text>
<text transform="translate(952,662.5) rotate(-90)" text-anchor="middle" font-size="13" fill="#c9eedd" opacity="0.55">VBUS</text>
<text transform="translate(1236,456.5) rotate(-90)" text-anchor="middle" font-size="12" fill="#e8c6c6" opacity="1">1</text>
<text transform="translate(1250,456.5) rotate(-90)" text-anchor="middle" font-size="12" fill="#e8c6c6" opacity="1">GND</text>
<text transform="translate(1298,456.5) rotate(-90)" text-anchor="middle" font-size="12" fill="#e8c6c6" opacity="1">2</text>
<text transform="translate(1312,456.5) rotate(-90)" text-anchor="middle" font-size="12" fill="#e8c6c6" opacity="1">VCC</text>
<text transform="translate(1236,539) rotate(-90)" text-anchor="middle" font-size="12" fill="#e8c6c6" opacity="1">2</text>
<text transform="translate(1250,539) rotate(-90)" text-anchor="middle" font-size="12" fill="#e8c6c6" opacity="1">D+</text>
<text transform="translate(1298,539) rotate(-90)" text-anchor="middle" font-size="12" fill="#e8c6c6" opacity="1">1</text>
<text transform="translate(1312,539) rotate(-90)" text-anchor="middle" font-size="12" fill="#e8c6c6" opacity="1">PB4</text>
<text transform="translate(1236,607.5) rotate(-90)" text-anchor="middle" font-size="12" fill="#e8c6c6" opacity="1">2</text>
<text transform="translate(1250,607.5) rotate(-90)" text-anchor="middle" font-size="12" fill="#e8c6c6" opacity="1">D-</text>
<text transform="translate(1298,607.5) rotate(-90)" text-anchor="middle" font-size="12" fill="#e8c6c6" opacity="1">1</text>
<text transform="translate(1312,607.5) rotate(-90)" text-anchor="middle" font-size="12" fill="#e8c6c6" opacity="1">PB3</text>
<text transform="translate(1035,673.5) rotate(-90)" text-anchor="middle" font-size="12" fill="#e8c6c6" opacity="1">2</text>
<text transform="translate(1049,673.5) rotate(-90)" text-anchor="middle" font-size="12" fill="#e8c6c6" opacity="1">VCC</text>
<text transform="translate(1098,673.5) rotate(-90)" text-anchor="middle" font-size="12" fill="#e8c6c6" opacity="1">1</text>
<text transform="translate(1112,673.5) rotate(-90)" text-anchor="middle" font-size="12" fill="#e8c6c6" opacity="1">N$3</text>
<text transform="translate(1161,673.5) rotate(-90)" text-anchor="middle" font-size="12" fill="#e8c6c6" opacity="1">2</text>
<text transform="translate(1175,673.5) rotate(-90)" text-anchor="middle" font-size="12" fill="#e8c6c6" opacity="1">N$3</text>
<text transform="translate(1225,673.5) rotate(-90)" text-anchor="middle" font-size="12" fill="#e8c6c6" opacity="1">1</text>
<text transform="translate(1239,673.5) rotate(-90)" text-anchor="middle" font-size="12" fill="#e8c6c6" opacity="1">D-</text>
<text x="1524.5" y="507" text-anchor="middle" font-size="9" fill="#e8c6c6">1</text>
<text x="1524.5" y="516" text-anchor="middle" font-size="9" fill="#e8c6c6">MISO</text>
<text x="1644.5" y="507" text-anchor="middle" font-size="9" fill="#e8c6c6">2</text>
<text x="1644.5" y="516" text-anchor="middle" font-size="9" fill="#e8c6c6">VPROG</text>
<text x="1524.5" y="563" text-anchor="middle" font-size="9" fill="#e8c6c6">3</text>
<text x="1524.5" y="572" text-anchor="middle" font-size="9" fill="#e8c6c6">SCK</text>
<text x="1644.5" y="563" text-anchor="middle" font-size="9" fill="#e8c6c6">4</text>
<text x="1644.5" y="572" text-anchor="middle" font-size="9" fill="#e8c6c6">MOSI</text>
<text x="1524.5" y="619" text-anchor="middle" font-size="9" fill="#e8c6c6">5</text>
<text x="1524.5" y="628" text-anchor="middle" font-size="9" fill="#e8c6c6">PB5/RESET</text>
<text x="1644.5" y="619" text-anchor="middle" font-size="9" fill="#e8c6c6">6</text>
<text x="1644.5" y="628" text-anchor="middle" font-size="9" fill="#e8c6c6">GND</text>
<text transform="translate(1579.5,466) rotate(-90)" text-anchor="middle" font-size="7.5" fill="#e8c6c6" opacity="1">2</text>
<text transform="translate(1586,466) rotate(-90)" text-anchor="middle" font-size="7.5" fill="#e8c6c6" opacity="1">VCC</text>
<text transform="translate(1613,466) rotate(-90)" text-anchor="middle" font-size="7.5" fill="#e8c6c6" opacity="1">1</text>
<text transform="translate(1620.5,466) rotate(-90)" text-anchor="middle" font-size="7.5" fill="#e8c6c6" opacity="1">VPROG</text>
<text x="1735.5" y="486" text-anchor="middle" font-size="11" fill="#e8c6c6">1</text>
<text x="1735.5" y="497" text-anchor="middle" font-size="11" fill="#e8c6c6">VPROG</text>
<text x="1790" y="486" text-anchor="middle" font-size="11" fill="#e8c6c6">1</text>
<text x="1790" y="497" text-anchor="middle" font-size="11" fill="#e8c6c6">SCK</text>
<text x="1735.5" y="549" text-anchor="middle" font-size="11" fill="#e8c6c6">2</text>
<text x="1735.5" y="560" text-anchor="middle" font-size="11" fill="#e8c6c6">N$11</text>
<text x="1790" y="549" text-anchor="middle" font-size="11" fill="#e8c6c6">2</text>
<text x="1790" y="560" text-anchor="middle" font-size="11" fill="#e8c6c6">N$9</text>
<text x="1735.5" y="619" text-anchor="middle" font-size="11" fill="#e8c6c6">2</text>
<text x="1735.5" y="630" text-anchor="middle" font-size="11" fill="#e8c6c6">N$11</text>
<text x="1790" y="619" text-anchor="middle" font-size="11" fill="#e8c6c6">2</text>
<text x="1790" y="630" text-anchor="middle" font-size="11" fill="#e8c6c6">N$9</text>
<text x="1735.5" y="682" text-anchor="middle" font-size="11" fill="#e8c6c6">1</text>
<text x="1735.5" y="693" text-anchor="middle" font-size="11" fill="#e8c6c6">GND</text>
<text x="1790" y="682" text-anchor="middle" font-size="11" fill="#e8c6c6">1</text>
<text x="1790" y="693" text-anchor="middle" font-size="11" fill="#e8c6c6">GND</text>
<rect x="1873" y="182" width="28.5" height="145" fill="#3f3f3f"/>
<text transform="translate(1882.5,264) rotate(90)" text-anchor="middle" font-size="10.5" font-weight="bold" fill="#f2f2f2" letter-spacing="0.55">MANUFACTURING</text>
<rect x="1873" y="343" width="28.5" height="146" fill="#3f3f3f"/>
<text transform="translate(1882.5,422.5) rotate(90)" text-anchor="middle" font-size="10.5" font-weight="bold" fill="#f2f2f2" letter-spacing="0.55">FUSION 360</text>
<rect x="1873" y="504" width="28.5" height="145" fill="#3f3f3f"/>
<text transform="translate(1882.5,588.5) rotate(90)" text-anchor="middle" font-size="10.5" font-weight="bold" fill="#f2f2f2" letter-spacing="0.55">FUSION TEAM</text>
<rect x="1880" y="190" width="14" height="14" rx="1.5" fill="#1f9d4d"/>
<rect x="1883.5" y="193.5" width="7" height="7" fill="none" stroke="#e8e337" stroke-width="1.3"/>
<path d="M1882,195.5 h1.5 M1882,198.5 h1.5 M1890.5,195.5 h1.5 M1890.5,198.5 h1.5" stroke="#e8e337" stroke-width="1"/>
<rect x="1880" y="363" width="14" height="15" rx="2" fill="#f5a01e"/>
<path d="M1883.5,374.5 V367 H1891 V370.5 H1887.5 V372.5 H1886 V374.5 Z" fill="#5a3a0a"/><rect x="1886" y="369" width="3" height="1.5" fill="#f5a01e"/>
<rect x="1880" y="523" width="14" height="15" rx="2" fill="#f5a01e"/>
<path d="M1883.5,534.5 V527 H1891 V530.5 H1887.5 V532.5 H1886 V534.5 Z" fill="#5a3a0a"/><rect x="1886" y="529" width="3" height="1.5" fill="#f5a01e"/>
</svg>
<svg class="abs" style="left:0;top:0;pointer-events:none" width="1921" height="1040" viewBox="0 0 1921 1040" font-family="Liberation Sans, sans-serif">
<path d="M5.7,3.7 H16.3 V14.5 L12.5,18.3 H5.7 Z" fill="#fff" stroke="#7a7a7a" stroke-width="1"/>
<path d="M16.3,14.5 L12.5,18.3 V14.5 Z" fill="#555"/>
<rect x="3.1" y="5.2" width="13.7" height="7.8" fill="#2a8f55"/>
<text x="10" y="11.8" font-size="7" fill="#b6f2cd" text-anchor="middle" textLength="11.5" lengthAdjust="spacingAndGlyphs">BRD</text>
<path d="M1799,10.5 H1809" stroke="#000" stroke-width="1"/>
<path d="M1846.5,7.5 H1853.5 V14.5 M1844.5,9.5 H1851.5 V16.5 H1844.5 Z" stroke="#000" stroke-width="1" fill="none"/>
<path d="M1890,5 L1900,15 M1900,5 L1890,15" stroke="#000" stroke-width="1.1"/>
<path d="M7.5,64 V93" stroke="#bdbdbd" stroke-width="1"/>
<path d="M7.5,104 V135" stroke="#cfcfcf" stroke-width="1"/>
<path d="M11.5,64 V93" stroke="#bdbdbd" stroke-width="1"/>
<path d="M11.5,104 V135" stroke="#cfcfcf" stroke-width="1"/>
<path d="M126.5,61 V95" stroke="#c2c2c2" stroke-width="1"/>
<path d="M170.5,61 V95" stroke="#c2c2c2" stroke-width="1"/>
<path d="M249.5,61 V95" stroke="#c2c2c2" stroke-width="1"/>
<path d="M293.5,61 V95" stroke="#c2c2c2" stroke-width="1"/>
<path d="M372.5,61 V95" stroke="#c2c2c2" stroke-width="1"/>
<path d="M626.5,61 V95" stroke="#c2c2c2" stroke-width="1"/>
<path d="M705.5,61 V95" stroke="#c2c2c2" stroke-width="1"/>
<path d="M784.5,61 V95" stroke="#c2c2c2" stroke-width="1"/>
<path d="M793.5,61 V95" stroke="#c2c2c2" stroke-width="1"/>
<path d="M840.5,61 V95" stroke="#c2c2c2" stroke-width="1"/>
<path d="M844.5,61 V95" stroke="#c2c2c2" stroke-width="1"/>
<path d="M54.5,100 V136" stroke="#d2d2d2" stroke-width="1"/>
<path d="M24,68 H34 L41,74 V87.7 H24 Z" fill="#f6f6f6" stroke="#c4c4c4" stroke-width="0.6"/>
<path d="M34,68 L41,74 H34 Z" fill="#333"/>
<path d="M33,80.6 H38.5 V78.2 L44,82.1 L38.5,86 V83.6 H33 Z" fill="#5a5a5a"/>
<path d="M44.3,89.2 h5.4 l-2.7,3.78 Z" fill="#555"/>
<path d="M59.5,68.5 H78.5 V87.5 H62.5 L59.5,84.5 Z" fill="#5c5c5c"/>
<rect x="64" y="69.5" width="11" height="7" fill="#f0f0f0"/>
<rect x="64.5" y="81.5" width="10" height="6" fill="#f0f0f0"/><rect x="66" y="82.5" width="2.5" height="4" fill="#5c5c5c"/>
<rect x="97" y="68.5" width="13" height="8" fill="#f4f4f4" stroke="#999" stroke-width="0.7"/>
<rect x="94" y="74.5" width="19" height="9" rx="1" fill="#8a8a8a"/>
<rect x="98" y="80.5" width="11" height="7" fill="#b8b8b8" stroke="#888" stroke-width="0.6"/>
<rect x="138" y="68" width="20" height="10" fill="#cf2030"/><rect x="138" y="78" width="20" height="10" fill="#b5b5b5"/>
<text x="148" y="76.8" font-size="10" font-weight="bold" fill="#fff" text-anchor="middle" textLength="18" lengthAdjust="spacingAndGlyphs">SCH</text>
<text x="148" y="86.8" font-size="10" font-weight="bold" fill="#fff" text-anchor="middle" textLength="18" lengthAdjust="spacingAndGlyphs">BRD</text>
<path d="M182.5,87.5 V76.5 L187,73.5 V76.5 L192,73.5 V76.5 L196,74 V70 H199.5 V87.5 Z" fill="#f2f2f2" stroke="#666" stroke-width="1"/>
<path d="M217.5,87.5 V76.5 L222,73.5 V76.5 L227,73.5 V76.5 L231,74 V70 H234.5 V87.5 Z" fill="#f2f2f2" stroke="#666" stroke-width="1"/>
<path d="M185,82.5 h3 M190,82.5 h3 M195,82.5 h3" stroke="#666" stroke-width="1.4"/>
<path d="M223.5,77 h5 v5 h3 l-5.5,5 l-5.5,-5 h3 Z" fill="#1fa84f"/>
<path d="M262,72 L265,68.2 H270 L267,72 Z" fill="#cfcfcf"/>
<rect x="262" y="72" width="5" height="16" fill="#979797"/><path d="M262,76 h5 M262,84 h5" stroke="#7d7d7d" stroke-width="0.8"/>
<path d="M267.3,72 L270.3,68.2 H275.3 L272.3,72 Z" fill="#cfcfcf"/>
<rect x="267.3" y="72" width="5" height="16" fill="#979797"/><path d="M267.3,76 h5 M267.3,84 h5" stroke="#7d7d7d" stroke-width="0.8"/>
<path d="M272.6,72 L275.6,68.2 H280.6 L277.6,72 Z" fill="#cfcfcf"/>
<rect x="272.6" y="72" width="5" height="16" fill="#979797"/><path d="M272.6,76 h5 M272.6,84 h5" stroke="#7d7d7d" stroke-width="0.8"/>
<path d="M277.6,72 L280.3,68.2 V84.5 L277.6,88 Z" fill="#4f4f4f"/>
<rect x="305" y="68" width="20" height="20" fill="#2a74c5"/><text x="315" y="81.5" font-size="9.5" font-weight="bold" fill="#fff" text-anchor="middle" textLength="17" lengthAdjust="spacingAndGlyphs">SCR</text>
<path d="M326.0,89 h6 l-3.0,4.199999999999999 Z" fill="#555"/>
<rect x="340" y="68" width="20" height="20" fill="#e5823c"/><text x="350" y="81.5" font-size="9.5" fill="#fff" text-anchor="middle" textLength="17" lengthAdjust="spacingAndGlyphs">ULP</text>
<path d="M361.0,89 h6 l-3.0,4.199999999999999 Z" fill="#555"/>
<circle cx="392" cy="76" r="6.3" fill="#f4f4f4" stroke="#4d4d4d" stroke-width="1.3"/>
<path d="M396.6,80.6 L402,86" stroke="#4d4d4d" stroke-width="2.2" stroke-linecap="round"/>
<rect x="388" y="73.5" width="8" height="5" fill="#4d4d4d"/>
<circle cx="427" cy="76" r="6.3" fill="#f4f4f4" stroke="#4d4d4d" stroke-width="1.3"/>
<path d="M431.6,80.6 L437,86" stroke="#4d4d4d" stroke-width="2.2" stroke-linecap="round"/>
<path d="M424,76 h6 M427,73 v6" stroke="#4d4d4d" stroke-width="1.3"/>
<circle cx="462" cy="76" r="6.3" fill="#f4f4f4" stroke="#4d4d4d" stroke-width="1.3"/>
<path d="M466.6,80.6 L472,86" stroke="#4d4d4d" stroke-width="2.2" stroke-linecap="round"/>
<path d="M459,76 h6" stroke="#4d4d4d" stroke-width="1.3"/>
<circle cx="497" cy="76" r="6.3" fill="#f4f4f4" stroke="#4d4d4d" stroke-width="1.3"/>
<path d="M501.6,80.6 L507,86" stroke="#4d4d4d" stroke-width="2.2" stroke-linecap="round"/>
<path d="M494,74.5 h6 M494,77.5 h6" stroke="#4d4d4d" stroke-width="1.3"/>
<circle cx="532" cy="76" r="6.3" fill="#f4f4f4" stroke="#4d4d4d" stroke-width="1.3"/>
<path d="M536.6,80.6 L542,86" stroke="#4d4d4d" stroke-width="2.2" stroke-linecap="round"/>
<rect x="528.5" y="73.5" width="7" height="5" fill="none" stroke="#4d4d4d" stroke-width="1"/><rect x="530" y="75" width="2.5" height="2" fill="#4d4d4d"/>
<path d="M545.0,89 h6 l-3.0,4.199999999999999 Z" fill="#555"/>
<g transform="translate(1139,0) scale(-1,1)">
<path d="M562.5,80 A7,7 0 0 1 574,73.2" fill="none" stroke="#4d4d4d" stroke-width="2"/><path d="M572,69.5 L577.5,74.5 L570.5,76.5 Z" fill="#4d4d4d"/>
<path d="M576.5,77 A7,7 0 0 1 565,83.8" fill="none" stroke="#4d4d4d" stroke-width="2"/><path d="M567,87.5 L561.5,82.5 L568.5,80.5 Z" fill="#4d4d4d"/>
</g>
<path d="M595,69.5 H599 L608,86.5 H613" fill="none" stroke="#d0202e" stroke-width="1.6"/>
<path d="M595,86.5 H599 L608,69.5 H613" fill="none" stroke="#8a8a8a" stroke-width="1.4"/>
<path d="M640,78 L648,72.5 V76 C655,76 657,80 657,83.5 C655,81 652,80 648,80 V83.5 Z" fill="#dedede" stroke="#b5b5b5" stroke-width="0.8"/>
<path d="M692,78 L684,72.5 V76 C677,76 675,80 675,83.5 C677,81 680,80 684,80 V83.5 Z" fill="#dedede" stroke="#b5b5b5" stroke-width="0.8"/>
<circle cx="727" cy="78" r="10" fill="#e0203a"/><rect x="721" y="76" width="12" height="4" fill="#fff"/>
<circle cx="762" cy="78" r="10" fill="#d4d4d4"/><text x="762" y="81.5" font-size="9" font-weight="bold" fill="#dedede" text-anchor="middle">GO</text>
<circle cx="815" cy="78" r="9.5" fill="#fbfbfb" stroke="#4d4d4d" stroke-width="1"/><text x="815" y="82.5" font-size="12.5" font-weight="bold" fill="#4d4d4d" text-anchor="middle">?</text>
<g fill="none" stroke="#4d4d4d" stroke-width="1.2"><rect x="-4.2" y="-2" width="6" height="4" rx="2" transform="translate(864,79) rotate(-40)"/><rect x="-1.8" y="-2" width="6" height="4" rx="2" transform="translate(866.5,77) rotate(-40)"/></g>
<text x="874" y="77.2" font-size="8" font-weight="bold" fill="#333" textLength="31.5">DESIGN</text><text x="874" y="84.5" font-size="8" font-weight="bold" fill="#333" textLength="20">LINK</text>
<rect x="925.5" y="72.5" width="10" height="11" fill="#f4f4f4" stroke="#4d4d4d" stroke-width="1"/><path d="M925,73.3 h11" stroke="#4d4d4d" stroke-width="2.2"/><path d="M927.5,77 h6 M927.5,79 h6 M927.5,81 h6" stroke="#4d4d4d" stroke-width="0.8"/>
<text x="943" y="77.2" font-size="8" font-weight="bold" fill="#333" textLength="15" lengthAdjust="spacingAndGlyphs">PCB</text><text x="943" y="84.5" font-size="8" font-weight="bold" fill="#333" textLength="27">QUOTE</text>
<path d="M28.5,108 V128 M33.5,108 V128 M38.5,108 V128 M24,113.5 H43 M24,118.5 H43 M24,123.5 H43" stroke="#4d4d4d" stroke-width="1"/>
<path d="M43.0,129 h6 l-3.0,4.199999999999999 Z" fill="#555"/>
<path d="M238.5,117.5 h6 l-3,4.5 Z" fill="#444"/>
<g transform="translate(270,119) rotate(40)" fill="none" stroke="#777" stroke-width="1.1"><path d="M-9,-2.5 L-5.5,-5.5 H8 V5.5 H-5.5 L-9,2.5 Z"/><circle cx="-5.5" cy="0" r="1.1"/><path d="M-1.5,-2.5 H5 M-1.5,0 H5 M-1.5,2.5 H5" stroke-width="0.8"/></g>
<path d="M1904.2,154 h5.6 l-2.8,4.6 Z" fill="#555"/>
<path d="M1908,184 L1911.5,180.5 L1915,184" fill="none" stroke="#c4c4c4" stroke-width="1.6"/>
<path d="M1908,988 L1911.5,991.5 L1915,988" fill="none" stroke="#c4c4c4" stroke-width="1.6"/>
<path d="M485,1003 L481.5,1006.5 L485,1010" fill="none" stroke="#c4c4c4" stroke-width="1.6"/>
<path d="M1893,1003 L1896.5,1006.5 L1893,1010" fill="none" stroke="#c4c4c4" stroke-width="1.6"/>
<path d="M1887.7,1017.8 L1873.3,1027.9 L1881.4,1030.2 L1878.5,1037.7 L1892.9,1028.2 L1884.8,1025.6 Z" fill="#18a84a"/>
<path d="M441.5,158.5 L447,153 M443,152.7 H447.3 V157" fill="none" stroke="#777" stroke-width="1.1"/>
<path d="M457.5,152 L464.5,159 M464.5,152 L457.5,159" stroke="#888" stroke-width="1.3"/>
<rect x="402.5" y="189.5" width="7" height="6" fill="none" stroke="#666" stroke-width="1"/><path d="M410,194 V203 L412.2,201 L413.8,204.5 L415.2,203.8 L413.6,200.5 L416.3,200.3 Z" fill="#111"/>
<circle cx="440" cy="195" r="5.2" fill="#fafafa" stroke="#666" stroke-width="1.2"/><path d="M444,199 L449,204" stroke="#666" stroke-width="1.6"/><rect x="437" y="193" width="6" height="4" fill="none" stroke="#666" stroke-width="0.9"/>
<circle cx="103.5" cy="262" r="4.3" fill="none" stroke="#8a8a8a" stroke-width="1.1"/><path d="M106.5,265.5 L110,269" stroke="#8a8a8a" stroke-width="1.3"/><path d="M107.7,269 h5.6 l-2.8,3.2 Z" fill="#333"/>
<path d="M383.7,260.8 h6.6 l-3.3,4.8 Z" fill="#444"/>
<g transform="translate(426.5,263) rotate(45)" fill="#6a6a6a"><rect x="-1.6" y="-3" width="3.2" height="12.5" rx="1.6"/><path d="M1.4,-9.28 V-5.2 H-1.4 V-9.28 A4.5,4.5 0 1 0 1.4,-9.28 Z"/></g>
<path d="M434.4,271.6 h6 l-3,4.6 Z" fill="#555"/>
<circle cx="103.5" cy="528" r="4.3" fill="none" stroke="#8a8a8a" stroke-width="1.1"/><path d="M106.5,531.5 L110,535" stroke="#8a8a8a" stroke-width="1.3"/><path d="M107.7,535 h5.6 l-2.8,3.2 Z" fill="#333"/>
<path d="M383.7,526.8 h6.6 l-3.3,4.8 Z" fill="#444"/>
<g transform="translate(426.5,529) rotate(45)" fill="#6a6a6a"><rect x="-1.6" y="-3" width="3.2" height="12.5" rx="1.6"/><path d="M1.4,-9.28 V-5.2 H-1.4 V-9.28 A4.5,4.5 0 1 0 1.4,-9.28 Z"/></g>
<path d="M434.4,537.6 h6 l-3,4.6 Z" fill="#555"/>
<circle cx="103.5" cy="791" r="4.3" fill="none" stroke="#8a8a8a" stroke-width="1.1"/><path d="M106.5,794.5 L110,798" stroke="#8a8a8a" stroke-width="1.3"/><path d="M107.7,798 h5.6 l-2.8,3.2 Z" fill="#333"/>
<path d="M383.7,789.8 h6.6 l-3.3,4.8 Z" fill="#444"/>
<g transform="translate(426.5,792) rotate(45)" fill="#6a6a6a"><rect x="-1.6" y="-3" width="3.2" height="12.5" rx="1.6"/><path d="M1.4,-9.28 V-5.2 H-1.4 V-9.28 A4.5,4.5 0 1 0 1.4,-9.28 Z"/></g>
<path d="M434.4,800.6 h6 l-3,4.6 Z" fill="#555"/>
<path d="M123.5,288.5 L127,285 L130.5,288.5" fill="none" stroke="#555" stroke-width="1"/>
<path d="M130.5,553.5 L134,550 L137.5,553.5" fill="none" stroke="#555" stroke-width="1"/>
<path d="M136.5,816.5 L140,813 L143.5,816.5" fill="none" stroke="#555" stroke-width="1"/>
<path d="M437.5,561.5 L441.5,557.5 L445.5,561.5" fill="none" stroke="#444" stroke-width="1.6"/>
<path d="M437.5,727.5 L441.5,731.5 L445.5,727.5" fill="none" stroke="#444" stroke-width="1.6"/>
<path d="M100,991 L96,995 L100,999" fill="none" stroke="#444" stroke-width="1.6"/>
<path d="M439,991 L443,995 L439,999" fill="none" stroke="#444" stroke-width="1.6"/>
<path d="M8,146.5 H61 M8,150.5 H61" stroke="#cfcfcf" stroke-width="1"/>
<path d="M1,222.5 H68" stroke="#d4d4d4" stroke-width="1"/>
<path d="M1,290.5 H68" stroke="#d4d4d4" stroke-width="1"/>
<path d="M1,524.5 H68" stroke="#d4d4d4" stroke-width="1"/>
<path d="M1,559.5 H68" stroke="#d4d4d4" stroke-width="1"/>
<path d="M1,791.5 H68" stroke="#d4d4d4" stroke-width="1"/>
<path d="M1,859.5 H68" stroke="#d4d4d4" stroke-width="1"/>
<circle cx="18" cy="172" r="9.7" fill="#f8f8f8" stroke="#3c3c3c" stroke-width="1"/>
<circle cx="18" cy="167" r="1.3" fill="#3c3c3c"/><path d="M15.5,170.5 H19 V176.5 M15,176.8 H21.5" stroke="#3c3c3c" stroke-width="1.5" fill="none"/>
<path d="M42,172 Q51,162 60,172 Q51,182 42,172 Z" fill="#f8f8f8" stroke="#3c3c3c" stroke-width="1"/><circle cx="51" cy="172" r="4.6" fill="none" stroke="#3c3c3c" stroke-width="1"/><circle cx="51" cy="172" r="2.3" fill="#3c3c3c"/>
<path d="M9,199.5 L13,195.5 H27.5 L23.5,199.5 Z" fill="#5a5a5a"/>
<path d="M9,204.5 L13,200.5 H27.5 L23.5,204.5 Z M9,209.5 L13,205.5 H27.5 L23.5,209.5 Z M9,214 L13,210 H27.5 L23.5,214 Z" fill="#f8f8f8" stroke="#888" stroke-width="0.8"/>
<path d="M27.0,215 h6 l-3.0,4.199999999999999 Z" fill="#555"/>
<rect x="42.5" y="196.5" width="11" height="8" fill="none" stroke="#3c3c3c" stroke-width="1.2" stroke-dasharray="1.5 1.2"/>
<path d="M54.5,205 V214.5 L56.8,212.3 L58.5,216 L60,215.3 L58.3,211.7 L61.3,211.5 Z" fill="#222"/>
<path d="M18,232 V248 M10,240 H26" stroke="#3c3c3c" stroke-width="1.3"/>
<path d="M15,233.5 L18,230 L21,233.5 Z M15,246.5 L18,250 L21,246.5 Z M11.5,237 L8,240 L11.5,243 Z M24.5,237 L28,240 L24.5,243 Z" fill="#3c3c3c"/>
<path d="M49.5,232 V249 H42.5 Z" fill="#f8f8f8" stroke="#777" stroke-width="1"/><path d="M52.5,232 V249 H59.5 Z" fill="#777"/>
<path d="M11.2,271 A7,7 0 1 1 15,278.3" fill="none" stroke="#3c3c3c" stroke-width="1.2"/><path d="M8.5,268.5 L14.5,269.5 L10.5,274 Z" fill="#3c3c3c"/>
<path d="M41.5,263 V282" stroke="#3c3c3c" stroke-width="1.2"/><rect x="45" y="267" width="15" height="3.5" fill="#9a9a9a"/><rect x="45" y="274.5" width="9" height="3.5" fill="#9a9a9a"/>
<path d="M11,301 H20 V308 L25,315" fill="none" stroke="#1e7fd0" stroke-width="1.8"/><circle cx="10.7" cy="300.8" r="3.1" fill="#1fa84f"/><circle cx="25" cy="315" r="3.1" fill="#1fa84f"/>
<path d="M44,301 H53 V308 L58,315" fill="none" stroke="#1e7fd0" stroke-width="1.8"/><circle cx="43.7" cy="300.8" r="3.1" fill="#1fa84f"/><circle cx="58" cy="315" r="3.1" fill="#1fa84f"/>
<path d="M48.3,305.3 L53.7,310.7 M53.7,305.3 L48.3,310.7" stroke="#e8222c" stroke-width="1.9"/>
<path d="M14,334 L24,345" stroke="#999" stroke-width="1.2"/><circle cx="13.5" cy="333.5" r="2.6" fill="#6aa84f"/><circle cx="25" cy="345.5" r="2.6" fill="#6aa84f"/><path d="M17,337 L21,341 M19,335.5 L23,339.5" stroke="#1e7fd0" stroke-width="1.2"/>
<path d="M15,341.8 L7.800000000000001,346.5 L11.6,346.8 L9.3,351 L16.4,345.5 L12.6,345.2 Z" fill="#5a5a5a"/>
<path d="M45,334 H54 V341 L59,348" fill="none" stroke="#1e7fd0" stroke-width="1.8"/><circle cx="44.7" cy="333.8" r="3.1" fill="#1fa84f"/><circle cx="59" cy="348" r="3.1" fill="#1fa84f"/>
<path d="M48,341.8 L40.8,346.5 L44.6,346.8 L42.3,351 L49.4,345.5 L45.6,345.2 Z" fill="#5a5a5a"/>
<path d="M23,374.8 H27 V364.5" fill="none" stroke="#1e7fd0" stroke-width="2"/><circle cx="18.2" cy="374.8" r="6.7" fill="#1fa84f"/><circle cx="18.2" cy="374.8" r="1.3" fill="#e8f8ee"/><path d="M8.8,383.5 V373.4" stroke="#d02030" stroke-width="2.2"/>
<rect x="41.5" y="364.5" width="19" height="19" fill="#f8f8f8" stroke="#555" stroke-width="1"/><circle cx="51" cy="374" r="6.2" fill="#6a6a6a"/>
<path d="M18,398.5 L27,405.5 L23.5,415.5 H12.5 L9,405.5 Z" fill="#f8f8f8" stroke="#3c3c3c" stroke-width="1.1"/>
<text x="51" y="415" font-size="23" fill="#222" text-anchor="middle">A</text>
<path d="M11.5,433 L25,446 M25,433 L11,446.5" stroke="#777" stroke-width="1.2"/><rect x="15.5" y="437" width="5" height="5" fill="#ccc" stroke="#777" stroke-width="0.8"/>
<circle cx="11" cy="433" r="2.4" fill="#f8f8f8" stroke="#555" stroke-width="1"/>
<circle cx="25" cy="433" r="2.4" fill="#f8f8f8" stroke="#555" stroke-width="1"/>
<circle cx="11" cy="447" r="2.4" fill="#f8f8f8" stroke="#555" stroke-width="1"/>
<circle cx="25" cy="446.5" r="2.4" fill="#f8f8f8" stroke="#555" stroke-width="1"/>
<path d="M44,440 H58" stroke="#888" stroke-width="1.3"/><circle cx="43.5" cy="440" r="2.6" fill="#1fa84f"/><circle cx="58.5" cy="440" r="2.6" fill="#1fa84f"/>
<path d="M9,465 V483 M11,472.5 H17 M20,465 L26,473 L20,483" fill="none" stroke="#3c3c3c" stroke-width="1.1"/><path d="M15,470 L19,472.5 L15,475 Z" fill="#3c3c3c"/>
<path d="M61,464.5 H41.5 V483 H48 Q48,480 46,480" fill="none" stroke="#666" stroke-width="1"/><path d="M48,481.5 L61,468" stroke="#3c3c3c" stroke-width="1.6"/>
<path d="M8,503 H15 M8,507 H17 M8,511 H19 M21,503 H28 M22,507 H28 M24,511 H28" stroke="#aaa" stroke-width="1"/><path d="M14,498 L22,516" stroke="#3c3c3c" stroke-width="1.2"/>
<path d="M42,509 Q43,515 45,515 Q47,515 47,507 Q47,499 50,499 Q53,499 53,507 Q53,515 56,515 Q59,515 60,508" fill="none" stroke="#222" stroke-width="1.4"/>
<path d="M9,538 L14,533 H27.5 V544 L22.5,549 H9 Z" fill="#dcdcdc" stroke="#555" stroke-width="1"/><path d="M22.5,538 L27.5,533 V544 L22.5,549 Z" fill="#8a8a8a"/><path d="M9,538 L14,533 H27.5 L22.5,538 Z" fill="#f2f2f2"/><path d="M9,538 H22.5 V549 M22.5,538 L27.5,533" fill="none" stroke="#555" stroke-width="1"/>
<ellipse cx="17" cy="535" rx="2" ry="1.2" fill="#999"/><ellipse cx="22.5" cy="535" rx="2" ry="1.2" fill="#999"/>
<path d="M8.5,546.5 H17 M12.8,542.2 V550.8" stroke="#1fa84f" stroke-width="2.4"/>
<path d="M52,532 H55 A5,5 0 0 1 55,542 H52 Z" fill="#f8f8f8" stroke="#444" stroke-width="1"/><path d="M48.5,535 H52 M48.5,539 H52 M60,537 H63" stroke="#444" stroke-width="1"/>
<path d="M41,547 H49.5 M45.3,542.7 V551.3" stroke="#1fa84f" stroke-width="2.4"/>
<path d="M60.0,550 h6 l-3.0,4.199999999999999 Z" fill="#555"/>
<text x="16.5" y="573" font-size="9.5" font-weight="bold" fill="#333" text-anchor="middle">R2</text><path d="M10,574.5 H24" stroke="#333" stroke-width="0.8"/><text x="17" y="583.5" font-size="9" font-weight="bold" fill="#bdbdbd" text-anchor="middle">10k</text>
<text x="49.5" y="573" font-size="9.5" font-weight="bold" fill="#bdbdbd" text-anchor="middle">R2</text><path d="M43,574.5 H57" stroke="#aaa" stroke-width="0.8"/><text x="50" y="583.5" font-size="9" font-weight="bold" fill="#222" text-anchor="middle">10k</text>
<path d="M60.0,586 h6 l-3.0,4.199999999999999 Z" fill="#555"/>
<path d="M10.5,599 H18 L21,602 V614 H10.5 Z" fill="#f4f4f4" stroke="#555" stroke-width="1"/><path d="M15.5,603 H22 L25.5,606.5 V618.5 H15.5 Z" fill="#f8f8f8" stroke="#555" stroke-width="1"/>
<rect x="43.5" y="601" width="12" height="15" fill="#777"/><rect x="46.5" y="598.5" width="6" height="4" rx="1" fill="#555"/><path d="M48.5,605 H55 L58.5,608.5 V618.5 H48.5 Z" fill="#f8f8f8" stroke="#555" stroke-width="1"/>
<path d="M11.5,637 H24.5 L23.5,650.5 H12.5 Z" fill="#f4f4f4" stroke="#666" stroke-width="1"/><path d="M10,636 H26 M15,633.5 H21" stroke="#666" stroke-width="1.4"/><path d="M15.3,640 V647.5 M18,640 V647.5 M20.7,640 V647.5" stroke="#666" stroke-width="1.1"/>
<g transform="translate(52,642) rotate(45) scale(1.2)" fill="#666"><rect x="-1.7" y="-3" width="3.4" height="13" rx="1.7"/><path d="M1.5,-9.24 V-5.2 H-1.5 V-9.24 A4.5,4.5 0 1 0 1.5,-9.24 Z"/></g>
<rect x="8.5" y="666" width="16" height="5" fill="#f8f8f8" stroke="#333" stroke-width="1"/><path d="M24.5,668.5 H27.5 V675 H18 V678" fill="none" stroke="#333" stroke-width="1.1"/><path d="M18,678 V685" stroke="#555" stroke-width="3.4" stroke-dasharray="1.6 0.8"/>
<rect x="-2.8" y="-1.4" width="5.6" height="2.8" fill="#999" stroke="#777" stroke-width="0.5" transform="translate(58.4,679.2) rotate(120)"/>
<rect x="-2.8" y="-1.4" width="5.6" height="2.8" fill="#999" stroke="#777" stroke-width="0.5" transform="translate(51.0,683.5) rotate(180)"/>
<rect x="-2.8" y="-1.4" width="5.6" height="2.8" fill="#999" stroke="#777" stroke-width="0.5" transform="translate(43.6,679.2) rotate(240)"/>
<rect x="-2.8" y="-1.4" width="5.6" height="2.8" fill="#999" stroke="#777" stroke-width="0.5" transform="translate(43.6,670.8) rotate(300)"/>
<rect x="-2.8" y="-1.4" width="5.6" height="2.8" fill="#999" stroke="#777" stroke-width="0.5" transform="translate(51.0,666.5) rotate(360)"/>
<rect x="-2.8" y="-1.4" width="5.6" height="2.8" fill="#999" stroke="#777" stroke-width="0.5" transform="translate(58.4,670.8) rotate(420)"/>
<g transform="translate(18,708) rotate(40)" fill="#f6f6f6" stroke="#888" stroke-width="1"><path d="M-10,-3 L-6,-6.5 H9 V6.5 H-6 L-10,3 Z"/><circle cx="-6" cy="0" r="1.2"/><path d="M-2,-3 H6 M-2,0 H6 M-2,3 H6" stroke-width="0.8"/></g>
<rect x="44.5" y="706.5" width="13" height="10.5" fill="#f6f6f6" stroke="#888" stroke-width="1"/><path d="M47,706.5 V703 A4,4 0 0 1 55,703 V706.5" fill="none" stroke="#888" stroke-width="1.6"/><rect x="50.3" y="710" width="1.5" height="3" fill="#555"/>
<path d="M17,735 H20 A4.5,4.5 0 0 1 20,744 H17 Z" fill="#f8f8f8" stroke="#777" stroke-width="1"/><path d="M14,737.5 H17 M14,741.5 H17 M24.5,739.5 H27.5" stroke="#777" stroke-width="1"/>
<path d="M8,734 h5 M10.5,731.5 v5 M8,748 h5 M10.5,745.5 v5" stroke="#222" stroke-width="1.3"/>
<circle cx="45.5" cy="745" r="4" fill="#f8f8f8" stroke="#555" stroke-width="1"/><rect x="52" y="741" width="8" height="8" fill="#777"/><path d="M45,738 A6,5.5 0 0 1 56,737.5" fill="none" stroke="#222" stroke-width="1.7"/><path d="M53.5,735.5 L58,735 L57.5,740 Z" fill="#222"/>
<path d="M60.0,750 h6 l-3.0,4.199999999999999 Z" fill="#555"/>
<path d="M14,768 A6.5,6.5 0 0 0 14,780" fill="none" stroke="#222" stroke-width="1.8"/><path d="M11.5,766 L16,768 L12.5,771.5 Z M11.5,782.5 L16,780 L12.5,776.5 Z" fill="#222"/><rect x="24.5" y="765" width="2.5" height="19" fill="#f8f8f8" stroke="#555" stroke-width="0.9"/><path d="M20,769 H24.5 M20,774 H24.5 M20,779 H24.5" stroke="#555" stroke-width="1"/>
<path d="M42,768.5 H49 M53,768.5 H60" stroke="#999" stroke-width="1.3"/><path d="M42,778 H48 M60,778 H54" stroke="#222" stroke-width="1.2"/><path d="M46.5,775.5 L50,778 L46.5,780.5 Z M55.5,775.5 L52,778 L55.5,780.5 Z" fill="#222"/>
<path d="M9,818 L27,800" stroke="#222" stroke-width="1.1"/>
<path d="M41.5,810 Q51,801 60.5,810" fill="none" stroke="#222" stroke-width="1.1"/>
<circle cx="18" cy="842" r="9.7" fill="#f8f8f8" stroke="#222" stroke-width="1"/>
<rect x="43.5" y="832.5" width="15" height="19" fill="#f8f8f8" stroke="#222" stroke-width="1"/>
<path d="M10.5,867 V887 M7,884.5 H28" stroke="#777" stroke-width="0.9"/><path d="M15,876.5 h6.5 M18.2,873.2 v6.5 M7.5,884.5 h6 M10.5,881.5 v6" stroke="#222" stroke-width="1.2"/>
<path d="M41.5,867 V887 M60.5,867 V887" stroke="#777" stroke-width="1"/><path d="M45,871.5 H57" stroke="#222" stroke-width="1.3"/><path d="M46.5,868.5 L42.5,871.5 L46.5,874.5 Z M55.5,868.5 L59.5,871.5 L55.5,874.5 Z" fill="#222"/>
<text x="17" y="908" font-size="10.5" fill="#555" text-anchor="middle" textLength="18" lengthAdjust="spacingAndGlyphs">ERC</text>
<path d="M16.5,914 L20,917.5 L26.5,911" fill="none" stroke="#1fa84f" stroke-width="2.6"/>
<text x="50" y="908" font-size="10.5" fill="#555" text-anchor="middle" textLength="18" lengthAdjust="spacingAndGlyphs">DRC</text>
<path d="M49.5,914 L53,917.5 L59.5,911" fill="none" stroke="#1fa84f" stroke-width="2.6"/>
<path d="M18,934.5 L27,951.5 H9 Z" fill="#f5b400" stroke="#f5b400" stroke-width="1" stroke-linejoin="round"/><path d="M18,940 V946" stroke="#222" stroke-width="2"/><circle cx="18" cy="948.7" r="1.2" fill="#222"/>
</svg>
</body></html>
